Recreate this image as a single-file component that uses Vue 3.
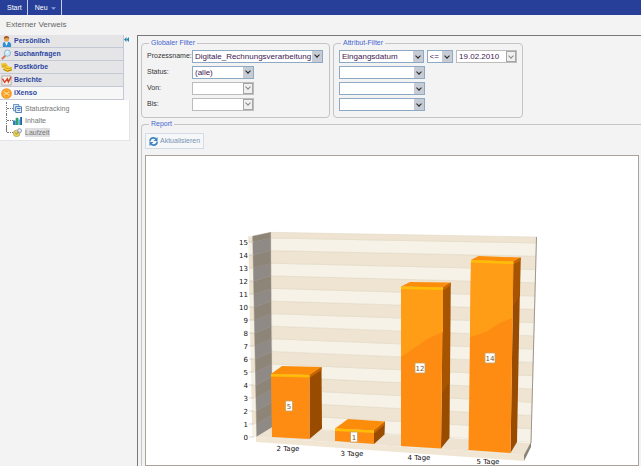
<script setup>
import { ref } from 'vue'

const groups = [
  { id: 'person', label: 'Persönlich' },
  { id: 'search', label: 'Suchanfragen' },
  { id: 'post', label: 'Postkörbe' },
  { id: 'report', label: 'Berichte' },
  { id: 'ixenso', label: 'iXenso', open: true }
]
const process = ref('Digitale_Rechnungsverarbeitung')
const status = ref('(alle)')
const attribute = ref('Eingangsdatum')
const operator = ref('<=')
const date = ref('19.02.2010')

/* Chart geometry: back wall spans x 126..391, left wall 108..126 */
const wallY = (n) => ({ outer: 281 - n * 13, inner: 271 - n * 12.6, right: 286 - n * 13.27 })
const bands = Array.from({ length: 16 }, (_, n) => {
  const a = wallY(n)
  const b = wallY(n === 15 ? 15.45 : n + 1)
  const lx = (y) => 107.7 + (y - 79) * 0.02
  const ix = (y) => 126 + (y - 76) * 0.008
  const rx = (y) => 391.5 - (y - 81) * 0.027
  return {
    n,
    odd: n % 2 === 1,
    strip: `${lx(a.outer) - 4.5},${a.outer} ${lx(a.outer)},${a.outer} ${lx(b.outer)},${b.outer} ${lx(b.outer) - 4.5},${b.outer}`,
    side: `${lx(a.outer)},${a.outer} ${ix(a.inner)},${a.inner} ${ix(b.inner)},${b.inner} ${lx(b.outer)},${b.outer}`,
    back: `${ix(a.inner)},${a.inner} ${rx(a.right)},${a.right} ${rx(b.right)},${b.right} ${ix(b.inner)},${b.inner}`,
    labelY: 284 - n * 13
  }
})
/* tl/tr/br/bl: front face; kl/kr: back edge of the lid; sb: rear foot of the side */
const bars = [
  { label: '2 Tage', value: 5, tl: [126, 218], tr: [164.5, 219], br: [164.5, 283], bl: [127, 281], kl: [137, 210], kr: [176.5, 211], sb: [177, 272.5], v: [144, 250], t: [143, 295] },
  { label: '3 Tage', value: 1, tl: [190, 272.5], tr: [229, 274.5], br: [229, 288], bl: [190, 285], kl: [203, 263], kr: [240, 265.5], sb: [239.5, 278.5], v: [209, 281], t: [207, 300] },
  { label: '4 Tage', value: 12, tl: [256, 130.5], tr: [298, 131.5], br: [296, 292.5], bl: [256, 290], kl: [265, 126], kr: [305.5, 126.5], sb: [304.5, 282], v: [275, 212], t: [274, 304], glow: '256,131 298,132 298,176 284,182 256,201', shade: '298,132 305.5,127 305,225 297,238' },
  { label: '5 Tage', value: 14, tl: [326, 104], tr: [368.5, 105.5], br: [365.5, 297], bl: [323.5, 294], kl: [333.5, 100], kr: [375.5, 101.5], sb: [372, 286], v: [345, 202], t: [343, 308], glow: '326,104 368,106 367,162 353,168 341,176 325,181', shade: '368.5,106 375.5,102 375,140 368,150' }
]
const pts = (...p) => p.map((q) => q.join(',')).join(' ')
const down = (p, d) => [p[0], p[1] + d]
</script>

<template>
  <div class="page">
    <nav class="topbar">
      <a href="#" class="top-item">Start</a>
      <a href="#" class="top-item">Neu
        <svg class="caret" viewBox="0 0 6 4"><path d="M0 1h6L3 4z" fill="#8ea1d8" /></svg>
      </a>
    </nav>
    <div class="crumb">Externer Verweis</div>
    <div class="body">
      <aside class="side">
        <div class="tree-panel">
          <button v-for="g in groups" :key="g.id" type="button" class="group" :class="{ open: g.open }">
            <svg v-if="g.id === 'person'" class="icon" viewBox="0 0 12 12">
              <path d="M2 12V9q0-3 4-3t5 3v3z" fill="#2e8fd2" /><path d="M4 6h4L6 11z" fill="#e8f2fa" />
              <circle cx="6" cy="3.2" r="2.8" fill="#e7a256" /><path d="M3.2 3Q3 0 6 0t3 3L7 1.8z" fill="#a45a18" />
            </svg>
            <svg v-else-if="g.id === 'search'" class="icon" viewBox="0 0 12 12">
              <path d="M5 7 1 11" stroke="#d86a50" stroke-width="2" /><circle cx="7" cy="4.5" r="3.4" fill="#cfe9f8" stroke="#86b4cf" /><path d="M5.5 4Q6 2.6 8 2.8" fill="none" stroke="#fff" />
            </svg>
            <svg v-else-if="g.id === 'post'" class="icon" viewBox="0 0 12 12">
              <path d="M0 1.500 5 1l2 2v3L1 6.500z" fill="#f0c22c" /><path d="M3 5.500 7 4l5 2v3.500L7 11 2.500 9z" fill="#f6cf38" /><path d="m2.500 8 4.500 2 5-1.500" fill="none" stroke="#a67a10" /><path d="M1 4.500 6 4M4 6l4 1.500L12 6" fill="none" stroke="#c4941a" stroke-width=".8" />
            </svg>
            <svg v-else-if="g.id === 'report'" class="icon" viewBox="0 0 12 12">
              <path d="M1 1h10v10H1z" fill="#f8f1ec" stroke="#b2a9a5" /><path d="M1.500 4 4 8l3-4 1 3.500L11 2" fill="none" stroke="#d34124" stroke-width="1.500" />
            </svg>
            <svg v-else class="icon" viewBox="0 0 12 12">
              <circle cx="6" cy="6" r="5.8" fill="#f8981c" /><path d="m3 4 6 4M3 8l6-4" stroke="#ffe3a0" stroke-width="1.2" /><circle cx="6" cy="6" r="3.8" fill="none" stroke="#fdbf59" stroke-width=".7" />
            </svg>
            {{ g.label }}
          </button>
          <ul class="tree">
            <li><a href="#">
              <svg class="leaf" viewBox="0 0 10 10"><path d="M.5.5h6v7h-6z" fill="#d5e5f5" stroke="#5f88b7" /><path d="M3 3h6.5v6.5H3z" fill="#e9f4ff" stroke="#346cab" /><path d="M4.5 5h4M5 7h3" stroke="#2667ae" /></svg>
              <span>Statustracking</span></a></li>
            <li><a href="#">
              <svg class="leaf" viewBox="0 0 10 10"><path d="M0 5h3v5H0z" fill="#2d7dc2" /><path d="M3 2h3v8H3z" fill="#32a06d" /><path d="M6 4h2v6H6z" fill="#58b5d8" /><path d="M8 1h2v9H8z" fill="#1961a8" /></svg>
              <span>Inhalte</span></a></li>
            <li><a href="#">
              <svg class="leaf" viewBox="0 0 10 10"><circle cx="4" cy="6" r="3.6" fill="#ead45a" stroke="#a89c50" stroke-width=".8" /><circle cx="7.3" cy="3" r="2.3" fill="#dfe5f6" stroke="#7a84ae" stroke-width=".8" /><path d="M2 5 4 7l2-3" fill="none" stroke="#766e35" stroke-width=".8" /></svg>
              <span class="current">Laufzeit</span></a></li>
          </ul>
        </div>
        <button type="button" class="collapse" aria-label="Einklappen">
          <svg viewBox="0 0 6 6"><path d="M3 0v6L0 3zM6 0v6L3 3z" fill="#2586ae" /></svg>
        </button>
      </aside>
      <main class="main">
        <div class="filters">
          <fieldset class="box global">
            <legend>Globaler Filter</legend>
            <label for="proc">Prozessname:</label>
            <span class="combo wide"><select id="proc" v-model="process"><option>Digitale_Rechnungsverarbeitung</option></select><i class="arrow"></i></span>
            <label for="status">Status:</label>
            <span class="combo mid"><select id="status" v-model="status"><option>(alle)</option></select><i class="arrow"></i></span>
            <label for="von">Von:</label>
            <span class="combo mid plain"><input id="von" type="text"><i class="arrow"></i></span>
            <label for="bis">Bis:</label>
            <span class="combo mid plain"><input id="bis" type="text"><i class="arrow"></i></span>
          </fieldset>
          <fieldset class="box attrs">
            <legend>Attribut-Filter</legend>
            <div class="row">
              <span class="combo attr"><select v-model="attribute" aria-label="Attribut 1"><option>Eingangsdatum</option></select><i class="arrow"></i></span>
              <span class="combo op"><select v-model="operator" aria-label="Operator"><option>&lt;=</option></select><i class="arrow"></i></span>
              <span class="combo date plain"><input v-model="date" type="text" aria-label="Datum"><i class="arrow"></i></span>
            </div>
            <div v-for="n in 3" :key="n" class="row">
              <span class="combo attr"><select :aria-label="`Attribut ${n + 1}`"><option></option></select><i class="arrow"></i></span>
            </div>
          </fieldset>
        </div>
        <fieldset class="box report">
          <legend>Report</legend>
          <button type="button" class="refresh">
            <svg viewBox="0 0 10 10"><path d="M1 5Q1 1 5 1q2 0 3 1.5M9 5q0 4-4 4-2 0-3-1.500" fill="none" stroke="#3e83c4" stroke-width="1.8" /><path d="M9.500 0v4.500H5zM.5 10V5.500H5z" fill="#3e83c4" /></svg>
            Aktualisieren
          </button>
          <div class="chart">
            <svg viewBox="1 0 492 309" preserveAspectRatio="xMidYMin meet" role="img" aria-label="Laufzeit">
              <g v-for="b in bands" :key="b.n">
                <polygon :points="b.strip" :fill="b.odd ? '#eee3cf' : '#f6f1e5'" />
                <polygon :points="b.side" :fill="b.odd ? '#8e8579' : '#8f8a85'" :stroke="b.odd ? '#8e8579' : '#8f8a85'" stroke-width=".5" />
                <polygon :points="b.back" :fill="b.odd ? '#eee4d1' : '#f6f2e7'" stroke="#e0d6c3" stroke-width=".5" />
                <path :d="`M104 ${b.labelY - 3}h5`" stroke="#c9bfae" stroke-width=".6" />
              </g>
              <polygon points="111,281 127.500,271 386,287 379,299" fill="#ede3d0" />
              <polygon points="111,281 379,299 379,305 111,286" fill="#f0e6d3" />
              <polygon points="379,299 386,286 386,291 379,305" fill="#8b8379" />
              <path d="M391.500 81 386 287" stroke="#9d978c" stroke-width="1" />
              <g v-for="b in bars" :key="b.label">
                <polygon :points="pts(b.tr, b.kr, b.sb, b.br)" fill="#994b00" />
                <polygon v-if="b.shade" :points="b.shade" fill="#a75400" />
                <polygon :points="pts(b.tl, b.tr, b.br, b.bl)" fill="#ff8c12" />
                <polygon v-if="b.glow" :points="b.glow" fill="#ff9d17" />
                <polygon :points="pts(b.tl, b.kl, b.kr, b.tr)" fill="#fb8d0b" />
                <polygon :points="pts(b.tr, b.kr, down(b.kr, 3), down(b.tr, 3))" fill="#c76500" />
                <polygon :points="pts(b.tl, b.tr, down(b.tr, 2.5), down(b.tl, 2.5))" fill="#ffbd08" />
                <rect :x="b.v[0] - (b.value > 9 ? 5 : 3.5)" :y="b.v[1] - 5" :width="b.value > 9 ? 10 : 7" height="10" fill="#fff" stroke="#c9a064" stroke-width=".8" />
                <text :x="b.v[0]" :y="b.v[1] + 3" class="val">{{ b.value }}</text>
                <text :x="b.t[0]" :y="b.t[1]" class="cat">{{ b.label }}</text>
              </g>
              <text v-for="b in bands" :key="'t' + b.n" x="103" :y="b.labelY" class="tick">{{ b.n }}</text>
            </svg>
          </div>
        </fieldset>
      </main>
    </div>
  </div>
</template>

<style>
body { margin: 0; background: #f3f3f3; }
</style>

<style scoped>
.page { font: 7px/12px "Liberation Sans", sans-serif; color: #333; display: flex; flex-direction: column; overflow: hidden; height: 100vh; }
.topbar { display: flex; background: #273f98; height: 15px; flex: none; }
.top-item { display: flex; align-items: center; gap: 3px; padding: 0 5px 0 7px; color: #fff; text-decoration: none; border-right: 1px solid #c5cdea; }
.caret { width: 5px; height: 4px; }
.crumb { font-size: 8px; line-height: 20px; height: 20px; padding-left: 6px; color: #666; flex: none; }
.body { display: flex; flex: 1; min-height: 0; }
.side { width: 137px; flex: none; display: flex; align-items: flex-start; }
.tree-panel { width: 124px; }
.group { display: flex; align-items: center; gap: 2px; width: 100%; height: 13px; box-sizing: border-box; padding: 0 1px; border: 0; border-bottom: 1px solid #c5c9d6; border-right: 1px solid #c5c9d6; background: #e5e5e7; color: #2c46a0; font: bold 7px/12px "Liberation Sans", sans-serif; text-align: left; }
.group.open { background: #f7f7f8; }
.icon { width: 11px; height: 11px; flex: none; }
.tree { list-style: none; margin: 0 -6px 0 0; padding: 2px 0 2px 6px; background: #fff; border-right: 1px solid #e4e4e6; border-bottom: 1px solid #e4e4e6; }
.tree li { height: 12px; display: flex; align-items: center; border-left: 1px dotted #777; }
.tree li:last-child { border-image: linear-gradient(#777 50%, transparent 50%) 1; }
.tree li::before { content: ""; width: 6px; border-top: 1px dotted #777; }
.tree a { display: flex; align-items: center; gap: 3px; color: #777; text-decoration: none; line-height: 9px; }
.tree .current { background: #dedee0; }
.leaf { width: 9px; height: 9px; }
.collapse { border: 0; padding: 2px 0; background: none; line-height: 0; margin: 0; }
.collapse svg { width: 5px; height: 5px; }
.main { flex: 1; min-width: 0; border-top: 1px solid #777; border-left: 1px solid #777; padding: 2px 0 0 3px; display: flex; flex-direction: column; }
.filters { display: flex; gap: 3px; flex: none; }
.box { margin: 0; min-width: 0; border: 1px solid #c4c4c8; border-radius: 4px; box-sizing: border-box; }
legend { font-size: 7px; line-height: 10px; color: #4565cf; padding: 0 2px; margin-left: 2px; }
.global { width: 189px; height: 80px; padding: 1px 5px; display: grid; grid-template-columns: 45px 1fr; grid-auto-rows: 14px; row-gap: 2px; align-items: center; }
.global label { white-space: nowrap; }
.attrs { width: 190px; padding: 2px 5px; }
.report legend { margin-left: 4px; }
.row { display: flex; gap: 3px; margin-bottom: 3px; }
.combo { display: inline-flex; box-sizing: border-box; height: 13px; border: 1px solid #8daac5; background: #fff; position: relative; }
.combo select, .combo input { appearance: none; width: 100%; min-width: 0; border: 0; margin: 0; padding: 0 0 0 2px; background: transparent; font: 8px/11px "Liberation Sans", sans-serif; color: #402050; outline: 0; border-radius: 0; }
.wide { width: 131px; }
.mid { width: 62px; }
.attr { width: 86px; }
.op { width: 27px; }
.date { width: 62px; }
.plain { border-color: #bcbcbc; }
.arrow { position: absolute; right: 0; top: 0; width: 10px; height: 11px; background: #c6cbd5; pointer-events: none; display: flex; align-items: center; justify-content: center; }
.arrow::before { content: ""; width: 3px; height: 3px; border: solid #222; border-width: 0 1px 1px 0; transform: translateY(-1px) rotate(45deg); }
.plain .arrow { background: #f0f0f0; box-shadow: inset 0 0 0 1px #a5a5a5; }
.plain .arrow::before { border-color: #888; }
.report { flex: 1; min-height: 0; margin-top: 1px; border-right: 0; border-bottom: 0; border-radius: 4px 0 0; padding: 4px 2px 0 3px; display: flex; flex-direction: column; }
.refresh { display: flex; align-items: center; gap: 2px; height: 16px; box-sizing: border-box; align-self: flex-start; border: 1px solid #d3dbe6; background: #f6f7f9; color: #7892b4; padding: 0 3px; font: 7px/12px "Liberation Sans", sans-serif; }
.refresh svg { width: 9px; height: 9px; }
.chart { margin-top: 6px; background: #fff; border: 1px solid #aaa39b; }
.chart svg { display: block; width: 100%; }
.tick, .cat, .val { font: 7px "DejaVu Sans", sans-serif; fill: #111; }
.tick { text-anchor: end; }
.cat, .val { text-anchor: middle; }
.val { fill: #77552c; }
</style>
